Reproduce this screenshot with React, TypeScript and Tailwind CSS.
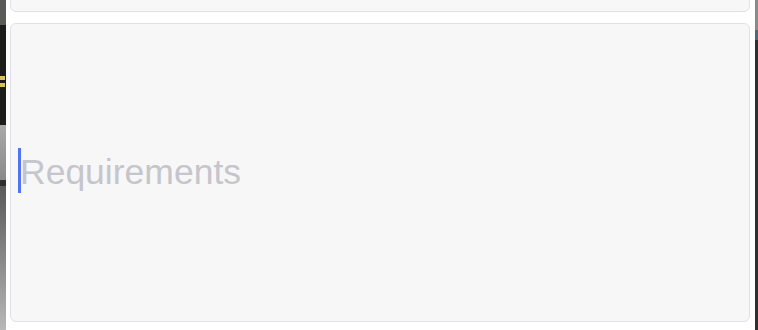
import React from "react";

const App = () => {
  return (
    <div className="flex h-[330px] w-[758px] overflow-hidden bg-white font-['Liberation_Sans',Arial,sans-serif]">
      {/* desktop peeking through on the left */}
      <div className="flex w-[6px] flex-col">
        <div className="h-[25px] bg-[#5a5a58]" />
        <div className="flex h-[100px] flex-col justify-center bg-[#1c1c1a] pt-[12px]">
          <div className="h-[4px] w-[5px] bg-[#d8c35a]" />
          <div className="mt-[3px] h-[4px] w-[5px] bg-[#d8c35a]" />
        </div>
        <div className="h-[55px] bg-gradient-to-b from-[#a9a9a9] to-[#8a8a8a]" />
        <div className="h-[6px] bg-[#2e2e2e]" />
        <div className="flex-1 bg-gradient-to-b from-[#5a5a5a] to-[#b8b8b8]" />
      </div>

      <div className="flex flex-1 flex-col gap-[11px] pl-[4px] pr-[5px]">
        <div className="mt-[-20px] h-[32px] shrink-0 rounded-[6px] border border-[#e1e0e9] bg-[#f7f7f8]" />
        <div className="flex h-[299px] shrink-0 items-center rounded-[6px] border border-[#e1e0e9] bg-[#f7f7f8] pb-[4px] pl-[7px]">
          <div className="flex items-center">
            <div className="h-[45px] w-[3px] bg-[#5074f6]" />
            <span className="-ml-[1px] mt-[4px] text-[35.5px] leading-none text-[#c5c5cc]">Requirements</span>
          </div>
        </div>
      </div>

      <div className="flex w-[3px] flex-col bg-[#3a3a3a]">
        <div className="h-[30px] bg-[#8a8a8a]" />
        <div className="h-[10px] bg-[#4a6a80]" />
        <div className="flex-1 bg-[#2f2f2f]" />
      </div>
    </div>
  );
};

export default App;
